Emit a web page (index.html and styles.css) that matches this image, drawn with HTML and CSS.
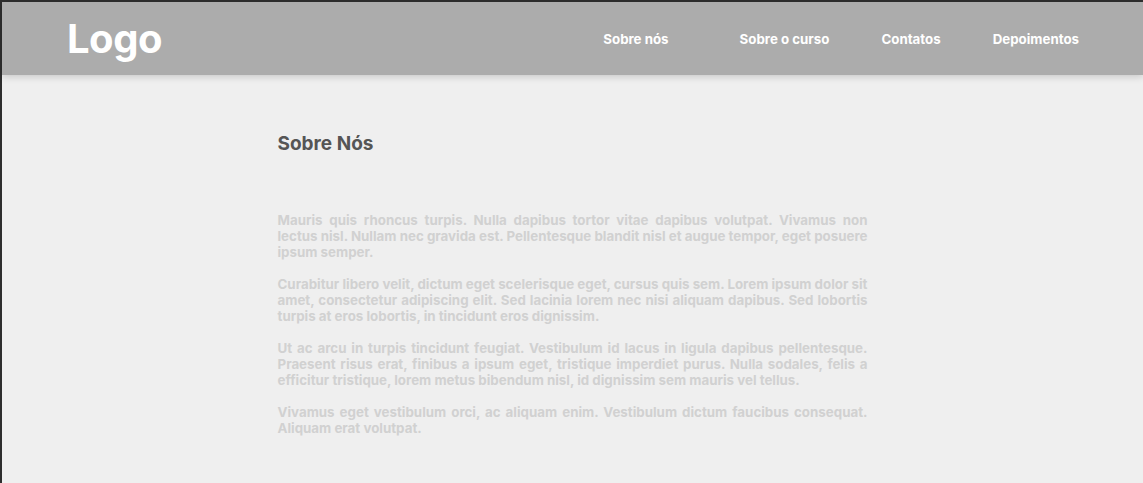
FILE: index.html
```html
<!DOCTYPE html>
<html lang="pt">
<head>
<meta charset="utf-8">
<title>Sobre Nós</title>
<link rel="stylesheet" href="styles.css">
</head>
<body>
<div class="frame">
  <header class="topbar">
    <div class="logo">Logo</div>
    <nav class="nav">
      <a class="nav-item nav-first" href="#">Sobre nós</a>
      <a class="nav-item" href="#">Sobre o curso</a>
      <a class="nav-item" href="#">Contatos</a>
      <a class="nav-item" href="#">Depoimentos</a>
    </nav>
  </header>
  <main class="content">
    <h1 class="title">Sobre Nós</h1>
    <div class="text">
      <p>Mauris quis rhoncus turpis. Nulla dapibus tortor vitae dapibus volutpat. Vivamus non lectus nisl. Nullam nec gravida est. Pellentesque blandit nisl et augue tempor, eget posuere ipsum semper.</p>
      <p>Curabitur libero velit, dictum eget scelerisque eget, cursus quis sem. Lorem ipsum dolor sit amet, consectetur adipiscing elit. Sed lacinia lorem nec nisi aliquam dapibus. Sed lobortis turpis at eros lobortis, in tincidunt eros dignissim.</p>
      <p>Ut ac arcu in turpis tincidunt feugiat. Vestibulum id lacus in ligula dapibus pellentesque. Praesent risus erat, finibus a ipsum eget, tristique imperdiet purus. Nulla sodales, felis a efficitur tristique, lorem metus bibendum nisl, id dignissim sem mauris vel tellus.</p>
      <p>Vivamus eget vestibulum orci, ac aliquam enim. Vestibulum dictum faucibus consequat. Aliquam erat volutpat.</p>
    </div>
  </main>
</div>
</body>
</html>
```

FILE: styles.css
```css
html, body {
  margin: 0;
  padding: 0;
  height: 100%;
  overflow: hidden;
}
body {
  font-family: Inter, "Noto Sans", sans-serif;
  background: #efefef;
}
.frame {
  box-sizing: border-box;
  height: 100%;
  border-top: 2px solid #2e2e2e;
  border-left: 2px solid #2e2e2e;
  background: #efefef;
}
.topbar {
  position: relative;
  height: 73px;
  background: #acacac;
  display: flex;
  align-items: center;
  justify-content: space-between;
  padding: 0 64px 0 65px;
  box-shadow: 0 2px 7px rgba(0,0,0,0.16);
}
.logo {
  color: #fff;
  font-weight: 700;
  font-size: 40px;
  letter-spacing: -0.5px;
  line-height: 1;
}
.nav {
  display: flex;
  align-items: center;
  gap: 52px;
  padding-top: 1px;
}
.nav-item {
  color: #fff;
  font-weight: 700;
  font-size: 13.3px;
  text-decoration: none;
}
.nav-first {
  margin-right: 19px;
}
.content {
  width: 590px;
  margin: 0 auto;
  padding-top: 56px;
}
.title {
  margin: 0;
  font-size: 19px;
  font-weight: 700;
  color: #555555;
  line-height: 26px;
}
.text {
  margin-top: 55px;
}
.text p {
  margin: 0 0 16px;
  font-size: 13.34px;
  font-weight: 700;
  line-height: 16px;
  color: #d1d1d1;
  text-align: justify;
}
```
